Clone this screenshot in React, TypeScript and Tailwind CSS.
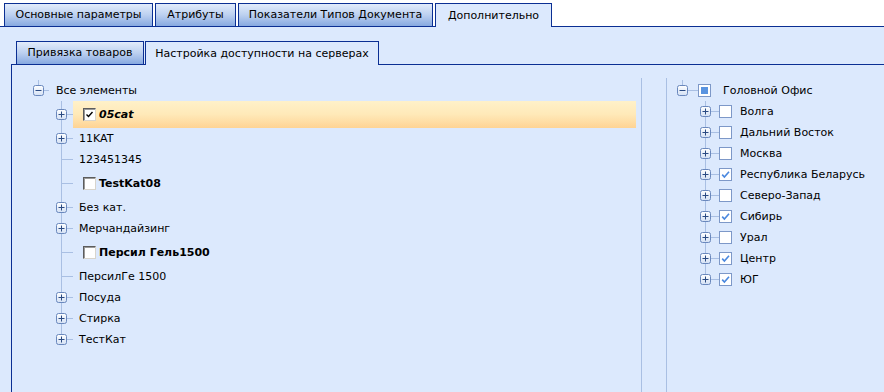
import { ReactNode } from "react";

const LINE = "#a9bfe3";

function Expander({ open }: { open: boolean }) {
  return (
    <g>
      <defs>
        <linearGradient id="exp" x1="0" y1="0" x2="0" y2="1">
          <stop offset="0" stopColor="#ffffff" />
          <stop offset="1" stopColor="#d3e0f4" />
        </linearGradient>
      </defs>
      <rect x="0.5" y="0.5" width="10" height="10" rx="2" fill="url(#exp)" stroke="#6a88bd" />
      <line x1="2.5" y1="5.5" x2="8.5" y2="5.5" stroke="#2a4a82" />
      {!open && <line x1="5.5" y1="2.5" x2="5.5" y2="8.5" stroke="#2a4a82" />}
    </g>
  );
}

// connector cell for a child row: vertical line + stub, optional expander
function Connector({ h, plus, last, w = 17 }: { h: number; plus?: boolean; last?: boolean; w?: number }) {
  const cy = Math.floor(h / 2);
  return (
    <svg width={w} height={h} className="shrink-0 block">
      <line x1="5.5" y1="0" x2="5.5" y2={last ? cy : h} stroke={LINE} />
      <line x1="5" y1={cy + 0.5} x2={w} y2={cy + 0.5} stroke={LINE} />
      {plus && (
        <g transform={`translate(0 ${cy - 5})`}>
          <Expander open={false} />
        </g>
      )}
    </svg>
  );
}

function ClassicBox({ checked }: { checked?: boolean }) {
  return (
    <span className="w-[13px] h-[13px] shrink-0 bg-white border border-t-[#5c5c5c] border-l-[#5c5c5c] border-r-[#d8d4cc] border-b-[#d8d4cc] shadow-[inset_1px_1px_0_#9a9a9a] flex items-center justify-center">
      {checked && (
        <svg width="9" height="9" viewBox="0 0 9 9">
          <path d="M1.5 4.5 L3.5 6.5 L7.5 2" fill="none" stroke="#000" strokeWidth="1.4" />
        </svg>
      )}
    </span>
  );
}

function FlatBox({ checked, partial }: { checked?: boolean; partial?: boolean }) {
  return (
    <span className="w-[13px] h-[13px] shrink-0 bg-white border border-[#7d98c8] flex items-center justify-center">
      {checked && (
        <svg width="9" height="9" viewBox="0 0 9 9">
          <path d="M1.2 4.6 L3.4 7 L8 1.8" fill="none" stroke="#4a88df" strokeWidth="1.6" />
        </svg>
      )}
      {partial && <span className="w-[7px] h-[7px] bg-[#5a94e0]" />}
    </span>
  );
}

type LeftItem = { label: string; plus?: boolean; box?: boolean; checked?: boolean; selected?: boolean };

const leftItems: LeftItem[] = [
  { label: "05cat", plus: true, box: true, checked: true, selected: true },
  { label: "11KAT", plus: true },
  { label: "123451345" },
  { label: "TestKat08", box: true },
  { label: "Без кат.", plus: true },
  { label: "Мерчандайзинг", plus: true },
  { label: "Персил Гель1500", box: true },
  { label: "ПерсилГе 1500" },
  { label: "Посуда", plus: true },
  { label: "Стирка", plus: true },
  { label: "ТестКат", plus: true },
];

const regions: { label: string; checked?: boolean }[] = [
  { label: "Волга" },
  { label: "Дальний Восток" },
  { label: "Москва" },
  { label: "Республика Беларусь", checked: true },
  { label: "Северо-Запад" },
  { label: "Сибирь", checked: true },
  { label: "Урал" },
  { label: "Центр", checked: true },
  { label: "ЮГ", checked: true },
];

function Tab({ children, active, w }: { children: ReactNode; active?: boolean; w: string }) {
  return (
    <div
      className={
        active
          ? `${w} h-[24px] -mb-px bg-[#dce9fd] border border-b-0 border-[#0b2f93] flex items-center justify-center pt-px`
          : `${w} h-[23px] bg-gradient-to-b from-[#e2ecfb] via-[#bcd0f0] to-[#87a9e0] border border-b-0 border-[#0b2f93] flex items-center justify-center pt-px`
      }
    >
      {children}
    </div>
  );
}

export default function App() {
  return (
    <div className="w-[884px] h-[392px] overflow-hidden bg-white flex flex-col text-[11px] text-black font-['DejaVu_Sans',sans-serif]">
      <div className="h-[27px] shrink-0 flex items-end gap-[2px] pl-[4px] border-b border-[#0b2f93]">
        <Tab w="w-[149px]">Основные параметры</Tab>
        <Tab w="w-[81px]">Атрибуты</Tab>
        <Tab w="w-[195px]">Показатели Типов Документа</Tab>
        <Tab w="w-[117px]" active>Дополнительно</Tab>
      </div>

      <div className="flex-1 bg-[#dce9fd] flex flex-col pt-[14px]">
        <div className="h-[23px] shrink-0 flex items-end gap-px pl-[16px] relative z-10">
          <Tab w="w-[128px]">Привязка товаров</Tab>
          <Tab w="w-[234px]" active>Настройка доступности на серверах</Tab>
        </div>

        <div className="flex-1 ml-[11px] border-l border-t border-[#0b2f93] flex pt-[13px]">
          {/* left tree */}
          <div className="w-[630px] shrink-0 border-r border-[#a9bfe3] pt-[2px]">
            <div className="h-[21px] flex items-center pl-[21px]">
              <svg width="23" height="21" className="shrink-0 block">
                <line x1="5.5" y1="0" x2="5.5" y2="5" stroke={LINE} />
                <line x1="11" y1="10.5" x2="16" y2="10.5" stroke={LINE} />
                <g transform="translate(0 5)">
                  <Expander open />
                </g>
              </svg>
              <span className="pt-px">Все элементы</span>
            </div>
            {leftItems.map((it, i) => {
              const h = it.box ? 27 : 21;
              return (
                <div key={it.label} className="flex pl-[44px] pr-[5px]" style={{ height: h }}>
                  <Connector h={h} plus={it.plus} last={i === leftItems.length - 1} />
                  <div
                    className={`flex-1 flex items-center ${it.box ? "pl-[10px] gap-[3px]" : "pl-[6px]"} ${
                      it.selected ? "bg-gradient-to-b from-[#fff1c9] via-[#ffe9b8] to-[#fed393]" : ""
                    }`}
                  >
                    {it.box && <ClassicBox checked={it.checked} />}
                    <span className={`pt-px ${it.box ? (it.selected ? "font-bold italic" : "font-bold") : ""}`}>
                      {it.label}
                    </span>
                  </div>
                </div>
              );
            })}
          </div>

          {/* right tree */}
          <div className="flex-1 ml-[24px] border-l border-[#a9bfe3] pt-[2px] pl-[10px]">
            <div className="h-[21px] flex items-center">
              <svg width="21" height="21" className="shrink-0 block">
                <line x1="5.5" y1="0" x2="5.5" y2="5" stroke={LINE} />
                <line x1="11" y1="10.5" x2="21" y2="10.5" stroke={LINE} />
                <g transform="translate(0 5)">
                  <Expander open />
                </g>
              </svg>
              <FlatBox partial />
              <span className="ml-[12px] pt-px">Головной Офис</span>
            </div>
            {regions.map((r, i) => (
              <div key={r.label} className="h-[21px] flex items-center pl-[23px]">
                <Connector h={21} plus last={i === regions.length - 1} w={19} />
                <FlatBox checked={r.checked} />
                <span className="ml-[8px] pt-px">{r.label}</span>
              </div>
            ))}
          </div>
        </div>
      </div>
    </div>
  );
}
